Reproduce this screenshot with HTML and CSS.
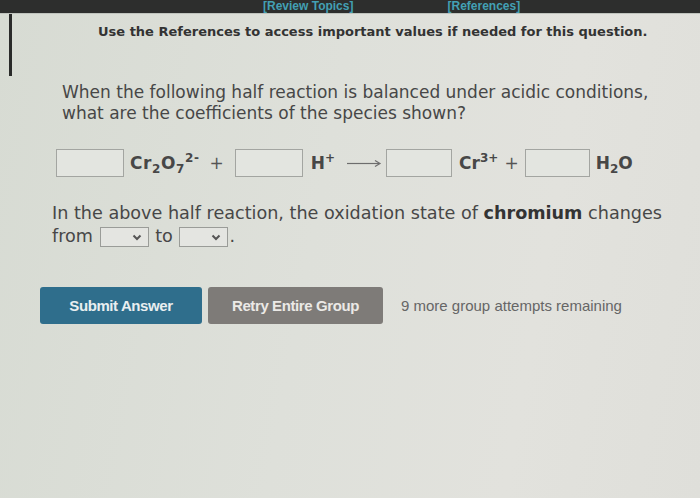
FILE: index.html
```html
<!DOCTYPE html>
<html>
<head>
<meta charset="utf-8">
<link rel="stylesheet" href="styles.css">
</head>
<body>
<div class="page">
  <div class="topbar">
    <a class="toplink review">[Review Topics]</a>
    <a class="toplink refs">[References]</a>
  </div>
  <div class="header">
    <p class="notice">Use the References to access important values if needed for this question.</p>
  </div>
  <p class="question">When the following half reaction is balanced under acidic conditions,<br>what are the coefficients of the species shown?</p>
  <div class="equation">
    <span class="box b1"></span>
    <span class="species s1">Cr<sub>2</sub>O<sub>7</sub><sup>2-</sup></span>
    <span class="plus p1">+</span>
    <span class="box b2"></span>
    <span class="species s2">H<sup>+</sup></span>
    <svg class="arrow" width="36" height="10" viewBox="0 0 36 10"><path d="M1 5.5 H33" stroke="#6d6d6d" stroke-width="1.2" fill="none"/><path d="M29 2.5 L34 5.5 L29 8.5" stroke="#6d6d6d" stroke-width="1.2" fill="none"/></svg>
    <span class="box b3"></span>
    <span class="species s3">Cr<sup>3+</sup></span>
    <span class="plus p2">+</span>
    <span class="box b4"></span>
    <span class="species s4">H<sub>2</sub>O</span>
  </div>
  <p class="oxidation">In the above half reaction, the oxidation state of <b>chromium</b> changes<br>from <span class="select s-from"><svg width="10" height="7" viewBox="0 0 10 7"><path d="M1.5 1.5 L5 5 L8.5 1.5" stroke="#555" stroke-width="2" fill="none"/></svg></span> to <span class="select s-to"><svg width="10" height="7" viewBox="0 0 10 7"><path d="M1.5 1.5 L5 5 L8.5 1.5" stroke="#555" stroke-width="2" fill="none"/></svg></span>.</p>
  <div class="actions">
    <button class="btn submit">Submit Answer</button>
    <button class="btn retry">Retry Entire Group</button>
    <span class="remaining">9 more group attempts remaining</span>
  </div>
</div>
</body>
</html>
```

FILE: styles.css
```css
html, body {
  margin: 0;
  padding: 0;
}
body {
  width: 700px;
  height: 498px;
  overflow: hidden;
  background: linear-gradient(100deg, #d7dbd3 0%, #dee0da 45%, #e2e2dd 75%, #dfdfda 100%);
  font-family: "DejaVu Sans", Verdana, sans-serif;
}
.page {
  width: 700px;
  height: 498px;
}
.topbar {
  height: 13px;
  background: #2d2e2d;
  border-bottom: 1px solid #bfc3bd;
  overflow: hidden;
  display: flex;
  align-items: flex-end;
  font-family: "Liberation Sans", Arial, sans-serif;
  font-weight: bold;
  font-size: 12px;
  line-height: 13px;
}
.toplink {
  color: #43a0b4;
  display: block;
}
.review {
  margin-left: 263px;
}
.refs {
  margin-left: 94px;
}
.header {
  margin-left: 9px;
  border-left: 3px solid #2a2b2a;
  height: 62px;
  overflow: hidden;
}
.notice {
  margin: 10px 0 0 86px;
  font-size: 13px;
  line-height: 16px;
  font-weight: bold;
  color: #333;
}
.question {
  margin: 6px 0 0 62px;
  font-size: 17px;
  line-height: 21px;
  color: #474747;
}
.equation {
  display: flex;
  align-items: center;
  margin: 24px 0 0 56px;
  height: 29px;
  font-size: 17px;
  color: #3e3e3e;
}
.box {
  display: block;
  width: 66px;
  height: 26px;
  border: 1px solid #a3a5a1;
  background: #e3e5e0;
}
.species {
  font-weight: bold;
  color: #474747;
  line-height: 20px;
}
.species sub, .species sup {
  font-size: 12px;
  line-height: 0;
}
.s1 { margin-left: 6px; letter-spacing: 0.6px; }
.p1 { margin-left: 10px; color: #555; }
.b2 { margin-left: 11px; }
.s2 { margin-left: 8px; }
.arrow { margin-left: 11px; }
.b3 { margin-left: 4px; width: 64px; }
.s3 { margin-left: 7px; }
.p2 { margin-left: 6px; color: #555; }
.b4 { margin-left: 6px; width: 63px; }
.s4 { margin-left: 6px; }
.oxidation {
  margin: 25px 0 0 52px;
  font-size: 17.6px;
  line-height: 23px;
  color: #474747;
}
.oxidation b {
  color: #333;
}
.select {
  display: inline-flex;
  align-items: center;
  justify-content: flex-end;
  box-sizing: border-box;
  width: 49px;
  height: 20px;
  border: 1px solid #9a9c98;
  background: #e4e5e1;
  padding-right: 6px;
  vertical-align: middle;
  margin: 0 1px;
}
.actions {
  display: flex;
  align-items: center;
  margin: 39px 0 0 40px;
}
.btn {
  border: none;
  border-radius: 3px;
  font-family: "Liberation Sans", Arial, sans-serif;
  font-weight: bold;
  font-size: 15px;
  letter-spacing: -0.4px;
  color: #e9eef0;
  height: 37px;
  padding: 0;
}
.submit {
  width: 162px;
  background: #2f6e8c;
}
.retry {
  width: 175px;
  margin-left: 6px;
  background: #7e7b78;
  color: #ebe9e6;
}
.remaining {
  margin-left: 18px;
  font-family: "Liberation Sans", Arial, sans-serif;
  font-size: 15px;
  letter-spacing: 0;
  color: #666;
}
```
